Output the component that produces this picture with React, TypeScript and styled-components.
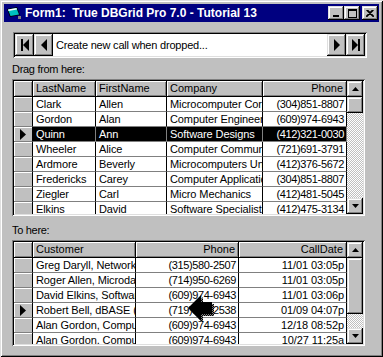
import React from 'react'
import styled, { createGlobalStyle } from 'styled-components'

const FACE = '#c0c0c0'
const SHADOW = '#808080'
const LIGHT = '#dfdfdf'
const HILITE = '#ffffff'
const NAVY = '#000080'
const FONT = '"Liberation Sans", Arial, sans-serif'

const RAISED = `inset -1px -1px #000, inset 1px 1px ${LIGHT}, inset -2px -2px ${SHADOW}, inset 2px 2px ${HILITE}`
const SUNKEN = `inset 1px 1px ${SHADOW}, inset -1px -1px ${HILITE}, inset 2px 2px #000, inset -2px -2px ${LIGHT}`

const GlobalStyle = createGlobalStyle`
  html, body { margin: 0; padding: 0; background: ${FACE}; }
  body { font-family: ${FONT}; font-size: 11px; color: #000; }
`

type Align = 'left' | 'right'

interface Column {
  title: string
  width: number
  align?: Align
  numeric?: boolean
}

interface GridProps {
  height: number
  columns: Column[]
  rows: string[][]
  current: number
  highlight?: boolean
  thumbHeight: number
}

const Window = styled.div`
  position: relative;
  width: 383px;
  height: 357px;
  box-sizing: border-box;
  padding: 4px;
  background: ${FACE};
  box-shadow: inset 1px 1px ${LIGHT}, inset -1px -1px #000, inset 2px 2px ${HILITE},
    inset -2px -2px ${SHADOW};
  display: flex;
  flex-direction: column;
`

const TitleBar = styled.div`
  height: 18px;
  background: ${NAVY};
  display: flex;
  align-items: center;
  padding: 0 1px 0 2px;
  color: #fff;
  font-weight: bold;
  font-size: 12px;
`

const TitleText = styled.span`
  flex: 1;
  margin-left: 3px;
  white-space: pre;
`

const CaptionButton = styled.div<{ $gap?: boolean }>`
  width: 16px;
  height: 14px;
  box-sizing: border-box;
  background: ${FACE};
  box-shadow: ${RAISED};
  display: flex;
  align-items: center;
  justify-content: center;
  margin-left: ${(p) => (p.$gap ? '2px' : '0')};
`

const Client = styled.div`
  flex: 1;
  display: flex;
  flex-direction: column;
  padding: 10px 0 0 8px;
`

const Navigator = styled.div`
  width: 354px;
  height: 26px;
  box-sizing: border-box;
  margin-left: 1px;
  padding: 2px;
  box-shadow: ${SUNKEN};
  display: flex;
`

const NavButton = styled.div`
  width: 19px;
  box-sizing: border-box;
  background: ${FACE};
  box-shadow: ${RAISED};
  display: flex;
  align-items: center;
  justify-content: center;
`

const NavCaption = styled.div`
  flex: 1;
  background: #fff;
  display: flex;
  align-items: center;
  padding-left: 3px;
  letter-spacing: -0.2px;
  white-space: nowrap;
  overflow: hidden;
`

const Label = styled.div<{ $top: number }>`
  height: 13px;
  line-height: 13px;
  letter-spacing: -0.3px;
  margin: ${(p) => p.$top}px 0 3px 0;
`

const GridFrame = styled.div<{ $height: number }>`
  width: 353px;
  height: ${(p) => p.$height}px;
  box-sizing: border-box;
  padding: 2px;
  box-shadow: ${SUNKEN};
  display: flex;
  background: #fff;
`

const GridBody = styled.div`
  flex: 1;
  overflow: hidden;
`

const Row = styled.div<{ $cols: string; $header?: boolean }>`
  display: grid;
  grid-template-columns: ${(p) => p.$cols};
  height: ${(p) => (p.$header ? 16 : 15)}px;
`

const HeaderCell = styled.div<{ $align?: Align }>`
  box-sizing: border-box;
  background: ${FACE};
  border-right: 1px solid #000;
  border-bottom: 1px solid #000;
  box-shadow: inset 1px 1px ${HILITE}, inset -1px -1px ${SHADOW};
  padding: 0 3px;
  line-height: 15px;
  text-align: ${(p) => p.$align || 'left'};
  white-space: nowrap;
  overflow: hidden;
`

const Selector = styled.div`
  box-sizing: border-box;
  background: ${FACE};
  border-right: 1px solid #000;
  border-bottom: 1px solid ${SHADOW};
  box-shadow: inset 1px 1px ${HILITE};
  display: flex;
  align-items: center;
  justify-content: center;
`

const Cell = styled.div<{ $align?: Align; $selected?: boolean; $numeric?: boolean }>`
  box-sizing: border-box;
  background: ${(p) => (p.$selected ? '#000' : '#fff')};
  color: ${(p) => (p.$selected ? '#fff' : '#000')};
  border-right: 1px solid ${(p) => (p.$selected ? SHADOW : '#000')};
  border-bottom: 1px solid ${SHADOW};
  padding: 0 2px 0 3px;
  line-height: 14px;
  letter-spacing: ${(p) => (p.$numeric ? '-0.35px' : '-0.1px')};
  text-align: ${(p) => p.$align || 'left'};
  white-space: nowrap;
  overflow: hidden;
`

const ScrollBar = styled.div`
  width: 16px;
  display: flex;
  flex-direction: column;
  background: ${FACE};
`

const ScrollButton = styled.div`
  width: 16px;
  height: 16px;
  box-sizing: border-box;
  background: ${FACE};
  box-shadow: ${RAISED};
  display: flex;
  align-items: center;
  justify-content: center;
`

const Track = styled.div`
  flex: 1;
  background: repeating-conic-gradient(${FACE} 0 25%, #fff 0 50%) 0 0 / 2px 2px;
`

const Thumb = styled(ScrollButton)<{ $height: number }>`
  height: ${(p) => p.$height}px;
`

const Cursor = styled.svg`
  position: absolute;
  left: 184px;
  top: 291px;
`

const RowMarker = () => (
  <svg width="6" height="11" viewBox="0 0 6 11">
    <polygon points="0,0 6,5.5 0,11" fill="#000" />
  </svg>
)

const ArrowUp = () => (
  <svg width="7" height="4" viewBox="0 0 7 4">
    <polygon points="3.5,0 7,4 0,4" fill="#000" />
  </svg>
)

const ArrowDown = () => (
  <svg width="7" height="4" viewBox="0 0 7 4">
    <polygon points="0,0 7,0 3.5,4" fill="#000" />
  </svg>
)

const Grid = ({ height, columns, rows, current, highlight, thumbHeight }: GridProps) => {
  const cols = ['19px', ...columns.map((c) => `${c.width}px`)].join(' ')
  return (
    <GridFrame $height={height}>
      <GridBody>
        <Row $cols={cols} $header>
          <HeaderCell />
          {columns.map((c) => (
            <HeaderCell key={c.title} $align={c.align}>
              {c.title}
            </HeaderCell>
          ))}
        </Row>
        {rows.map((r, i) => {
          const sel = highlight && i === current
          return (
            <Row key={i} $cols={cols}>
              <Selector>{i === current && <RowMarker />}</Selector>
              {r.map((v, j) => (
                <Cell
                  key={j}
                  $align={columns[j].align}
                  $numeric={columns[j].numeric}
                  $selected={sel}
                >
                  {v}
                </Cell>
              ))}
            </Row>
          )
        })}
      </GridBody>
      <ScrollBar>
        <ScrollButton>
          <ArrowUp />
        </ScrollButton>
        <Track>
          <Thumb $height={thumbHeight} />
        </Track>
        <ScrollButton>
          <ArrowDown />
        </ScrollButton>
      </ScrollBar>
    </GridFrame>
  )
}

const sourceColumns: Column[] = [
  { title: 'LastName', width: 63 },
  { title: 'FirstName', width: 71 },
  { title: 'Company', width: 96 },
  { title: 'Phone', width: 84, align: 'right', numeric: true },
]

const sourceRows = [
  ['Clark', 'Allen', 'Microcomputer Corp.', '(304)851-8807'],
  ['Gordon', 'Alan', 'Computer Engineering', '(609)974-6943'],
  ['Quinn', 'Ann', 'Software Designs', '(412)321-0030'],
  ['Wheeler', 'Alice', 'Computer Communications', '(721)691-3791'],
  ['Ardmore', 'Beverly', 'Microcomputers Unlimited', '(412)376-5672'],
  ['Fredericks', 'Carey', 'Computer Applications', '(304)851-8807'],
  ['Ziegler', 'Carl', 'Micro Mechanics', '(412)481-5045'],
  ['Elkins', 'David', 'Software Specialists', '(412)475-3134'],
]

const targetColumns: Column[] = [
  { title: 'Customer', width: 103 },
  { title: 'Phone', width: 103, align: 'right', numeric: true },
  { title: 'CallDate', width: 108, align: 'right' },
]

const targetRows = [
  ['Greg Daryll, Network Systems', '(315)580-2507', '11/01 03:05p'],
  ['Roger Allen, Microdata', '(714)950-6269', '11/01 03:05p'],
  ['David Elkins, Software Specialists', '(609)974-6943', '11/01 03:06p'],
  ['Robert Bell, dBASE (Ashton-Tate)', '(719)593-2538', '01/09 04:07p'],
  ['Alan Gordon, Computer Engineering', '(609)974-6943', '12/18 08:52p'],
  ['Alan Gordon, Computer Engineering', '(609)974-6943', '10/27 11:25a'],
]

export default function App() {
  return (
    <>
      <GlobalStyle />
      <Window>
        <TitleBar>
          <svg width="16" height="14" viewBox="0 0 16 14">
            <polygon points="1,3 11,1 14,9 4,11" fill="#000" />
            <polygon points="2,3.5 10.5,2 13,8.5 4.5,10" fill="#00c0c0" />
            <polygon points="2,3.5 10.5,2 11,3.5 2.5,5" fill="#fff" />
            <rect x="12" y="10" width="3" height="3" fill="#808080" />
          </svg>
          <TitleText>{'Form1:  True DBGrid Pro 7.0 - Tutorial 13'}</TitleText>
          <CaptionButton>
            <svg width="8" height="8" viewBox="0 0 8 8">
              <rect x="1" y="6" width="6" height="2" fill="#000" />
            </svg>
          </CaptionButton>
          <CaptionButton>
            <svg width="9" height="9" viewBox="0 0 9 9">
              <rect x="0.5" y="0.5" width="8" height="8" fill="none" stroke="#000" />
              <rect x="0" y="0" width="9" height="2" fill="#000" />
            </svg>
          </CaptionButton>
          <CaptionButton $gap>
            <svg width="8" height="7" viewBox="0 0 8 7">
              <path d="M0.5 0 L7.5 7 M7.5 0 L0.5 7 M1.5 0 L8 6.5 M6.5 0 L0 6.5" stroke="#000" strokeWidth="1.1" />
            </svg>
          </CaptionButton>
        </TitleBar>
        <Client>
          <Navigator>
            <NavButton>
              <svg width="8" height="12" viewBox="0 0 8 12">
                <rect x="0" y="0" width="2" height="12" fill="#000" />
                <polygon points="8,0 2,6 8,12" fill="#000" />
              </svg>
            </NavButton>
            <NavButton>
              <svg width="6" height="12" viewBox="0 0 6 12">
                <polygon points="6,0 0,6 6,12" fill="#000" />
              </svg>
            </NavButton>
            <NavCaption>Create new call when dropped...</NavCaption>
            <NavButton>
              <svg width="6" height="12" viewBox="0 0 6 12">
                <polygon points="0,0 6,6 0,12" fill="#000" />
              </svg>
            </NavButton>
            <NavButton>
              <svg width="8" height="12" viewBox="0 0 8 12">
                <polygon points="0,0 6,6 0,12" fill="#000" />
                <rect x="6" y="0" width="2" height="12" fill="#000" />
              </svg>
            </NavButton>
          </Navigator>
          <Label $top={5}>Drag from here:</Label>
          <Grid
            height={137}
            columns={sourceColumns}
            rows={sourceRows}
            current={2}
            highlight
            thumbHeight={16}
          />
          <Label $top={8}>To here:</Label>
          <Grid
            height={106}
            columns={targetColumns}
            rows={targetRows}
            current={3}
            thumbHeight={56}
          />
        </Client>
        <Cursor width="34" height="36" viewBox="0 0 34 36">
          <defs>
            <pattern id="dither" width="2" height="2" patternUnits="userSpaceOnUse">
              <rect width="2" height="2" fill="#808080" />
              <rect width="1" height="1" fill="#000" />
              <rect x="1" y="1" width="1" height="1" fill="#000" />
            </pattern>
          </defs>
          <polygon points="6,19 19,6 19,13 30,13 30,25 19,25 19,32" fill="url(#dither)" />
          <polygon points="4,17 17,4 17,11 28,11 28,23 17,23 17,30" fill="#000" />
        </Cursor>
      </Window>
    </>
  )
}
